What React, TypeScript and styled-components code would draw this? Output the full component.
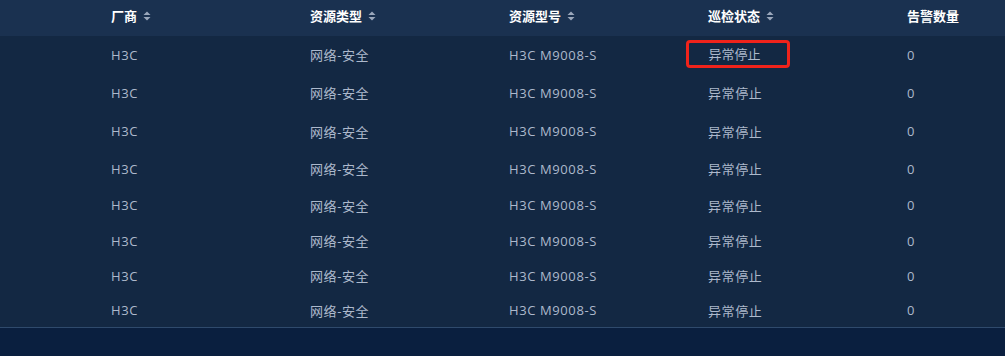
import React from 'react'
import styled, { createGlobalStyle } from 'styled-components'

const GlobalStyle = createGlobalStyle`
  html, body {
    margin: 0;
    padding: 0;
    background: #0a1f3f;
    font-family: "Open Sans", "Noto Sans CJK SC", sans-serif;
    overflow: hidden;
  }
`

const Page = styled.div`
  width: 1005px;
  height: 356px;
  overflow: hidden;
  background: #0a1f3f;
`

const Table = styled.div`
  display: grid;
  grid-template-columns: 95px repeat(5, 199px);
  width: max-content;
  border-bottom: 1px solid #2f4a6c;
`

const HeadCell = styled.div`
  height: 36px;
  padding: 0 0 5px 16px;
  display: flex;
  align-items: center;
  gap: 6px;
  background: #1a3150;
  color: #ffffff;
  font-family: "Noto Sans CJK SC", sans-serif;
  font-size: 13px;
  font-weight: 700;
  box-sizing: border-box;
`

const Cell = styled.div<{ $h: number }>`
  height: ${(p) => p.$h}px;
  padding-left: 16px;
  display: flex;
  align-items: center;
  background: #132843;
  color: #adb9cc;
  font-size: 13px;
  letter-spacing: 0.6px;
  box-sizing: border-box;
  white-space: nowrap;
`

const Flagged = styled.span`
  display: inline-flex;
  align-items: center;
  height: 28px;
  margin: -2px 0 0 -22px;
  padding: 0 0 0 19.5px;
  border: 3px solid #f0231b;
  border-radius: 4px;
  width: 104px;
  box-sizing: border-box;
  letter-spacing: 0;
`

const SortIcon = () => (
  <svg width="8" height="10" viewBox="0 0 8 10">
    <path d="M4 0.5 L7.5 4 H0.5 Z" fill="#9aa7bb" />
    <path d="M4 9.5 L7.5 6 H0.5 Z" fill="#9aa7bb" />
  </svg>
)

const columns = [
  { title: '', sort: false },
  { title: '厂商', sort: true },
  { title: '资源类型', sort: true },
  { title: '资源型号', sort: true },
  { title: '巡检状态', sort: true },
  { title: '告警数量', sort: false },
]

const heights = [37, 39, 38, 37, 36, 35, 35, 34]

const rows = heights.map((h, i) => ({
  h,
  vendor: 'H3C',
  type: '网络-安全',
  model: 'H3C M9008-S',
  status: '异常停止',
  alarms: 0,
  flagged: i === 0,
}))

export default function App() {
  return (
    <Page>
      <GlobalStyle />
      <Table>
        {columns.map((c, i) => (
          <HeadCell key={i}>
            {c.title}
            {c.sort && <SortIcon />}
          </HeadCell>
        ))}
        {rows.map((r, i) => (
          <React.Fragment key={i}>
            <Cell $h={r.h} />
            <Cell $h={r.h}>{r.vendor}</Cell>
            <Cell $h={r.h}>{r.type}</Cell>
            <Cell $h={r.h}>{r.model}</Cell>
            <Cell $h={r.h}>{r.flagged ? <Flagged>{r.status}</Flagged> : r.status}</Cell>
            <Cell $h={r.h}>{r.alarms}</Cell>
          </React.Fragment>
        ))}
      </Table>
    </Page>
  )
}
